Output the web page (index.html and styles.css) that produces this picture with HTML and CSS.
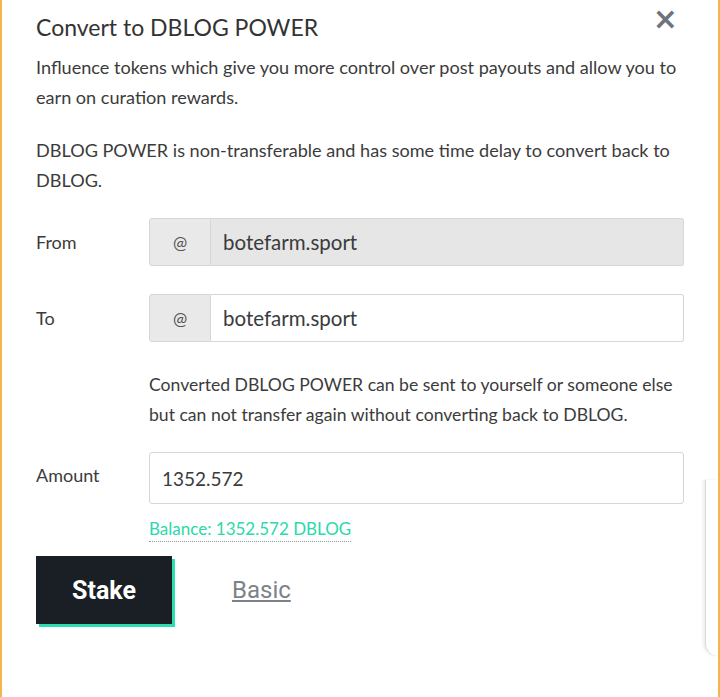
FILE: index.html
```html
<!DOCTYPE html>
<html lang="en">
<head>
  <meta charset="UTF-8">
  <title>Convert to DBLOG POWER</title>
  <link rel="stylesheet" href="styles.css">
</head>
<body>
  <div class="modal">
    <div class="modal__header">
      <h4 class="modal__title">Convert to DBLOG POWER</h4>
      <span class="modal__close">&times;</span>
    </div>

    <p class="modal__text">Influence tokens which give you more control over post payouts and allow you to earn on curation rewards.</p>
    <p class="modal__text">DBLOG POWER is non-transferable and has some time delay to convert back to DBLOG.</p>

    <div class="field">
      <label class="field__label">From</label>
      <div class="input-group">
        <span class="input-group__addon">@</span>
        <input class="input-group__input is-disabled" value="botefarm.sport" disabled>
      </div>
    </div>

    <div class="field">
      <label class="field__label">To</label>
      <div class="input-group">
        <span class="input-group__addon">@</span>
        <input class="input-group__input" value="botefarm.sport">
      </div>
    </div>

    <div class="field field--note">
      <div class="field__label"></div>
      <p class="field__help">Converted DBLOG POWER can be sent to yourself or someone else but can not transfer again without converting back to DBLOG.</p>
    </div>

    <div class="field field--amount">
      <label class="field__label">Amount</label>
      <div class="field__body">
        <input class="amount-input" value="1352.572">
        <div><span class="balance">Balance: 1352.572 DBLOG</span></div>
      </div>
    </div>

    <div class="actions">
      <button class="btn-stake">Stake</button>
      <a class="link-basic" href="#">Basic</a>
    </div>
  </div>
  <div class="edge-panel"></div>
</body>
</html>
```

FILE: styles.css
```css
* {
  box-sizing: border-box;
}

html, body {
  margin: 0;
  padding: 0;
  height: 100%;
  background: #fff;
  font-family: 'Lato', 'Open Sans', sans-serif;
  color: #3b3b3b;
}

.modal {
  min-height: 100%;
  border-left: 2px solid #f2b64a;
  border-right: 2px solid #f2b64a;
  padding: 10px 34px 0 34px;
}

.modal__header {
  display: flex;
  justify-content: space-between;
  align-items: flex-start;
}

.modal__title {
  margin: 0;
  padding-top: 2px;
  font-size: 23px;
  font-weight: normal;
  line-height: 30px;
  color: #333;
}

.modal__close {
  margin-right: 6px;
  margin-top: -6px;
  font-family: 'DejaVu Sans', sans-serif;
  font-size: 30px;
  font-weight: bold;
  line-height: 30px;
  color: #6c757d;
}

.modal__text {
  margin: 10px 0 23px;
  font-size: 18.1px;
  line-height: 30px;
}

.modal__text + .modal__text {
  margin-top: 0;
}

.field {
  display: flex;
  align-items: center;
  margin-bottom: 28px;
}

.field__label {
  flex: 0 0 113px;
  font-size: 18px;
}

.input-group {
  flex: 1;
  display: flex;
  height: 48px;
}

.input-group__addon {
  flex: 0 0 62px;
  display: flex;
  align-items: center;
  justify-content: center;
  background: #e9e9e9;
  border: 1px solid #d6d6d6;
  border-radius: 3px 0 0 3px;
  font-size: 17px;
  color: #555;
}

.input-group__input {
  flex: 1;
  min-width: 0;
  border: 1px solid #d6d6d6;
  border-left: none;
  border-radius: 0 3px 3px 0;
  padding: 0 12px;
  font-family: inherit;
  font-size: 20.5px;
  color: #3b3b3b;
  background: #fff;
}

.input-group__input.is-disabled {
  background: #e6e6e6;
}

.field--note {
  margin-top: 2px;
  margin-bottom: 22px;
}

.field__help {
  flex: 1;
  margin: 0;
  font-size: 17.6px;
  line-height: 30px;
}

.field--amount {
  align-items: flex-start;
  margin-bottom: 14px;
}

.field--amount .field__label {
  padding-top: 12px;
}

.field__body {
  flex: 1;
}

.amount-input {
  width: 100%;
  height: 52px;
  border: 1px solid #d6d6d6;
  border-radius: 3px;
  padding: 0 12px;
  font-family: inherit;
  font-size: 19px;
  color: #3b3b3b;
}

.balance {
  display: inline-block;
  margin-top: 14px;
  padding-bottom: 1px;
  border-bottom: 1px dotted #9a9a9a;
  font-size: 17px;
  line-height: 22px;
  color: #2bd9a9;
}

.actions {
  display: flex;
  align-items: center;
  gap: 60px;
}

.btn-stake {
  width: 136px;
  height: 68px;
  border: none;
  background: #1a1f25;
  box-shadow: 3px 3px 0 #2ddfb0;
  font-family: 'Roboto', sans-serif;
  font-size: 25px;
  font-weight: bold;
  color: #fff;
}

.link-basic {
  font-family: 'Roboto', sans-serif;
  font-size: 24px;
  color: #7b8389;
  text-decoration: underline;
}

.edge-panel {
  position: absolute;
  top: 480px;
  right: 2px;
  width: 13px;
  height: 176px;
  background: #fff;
  border-left: 1px solid #dcdcdc;
  border-bottom-left-radius: 16px;
  box-shadow: -2px 0 3px rgba(0, 0, 0, 0.08);
}
```
